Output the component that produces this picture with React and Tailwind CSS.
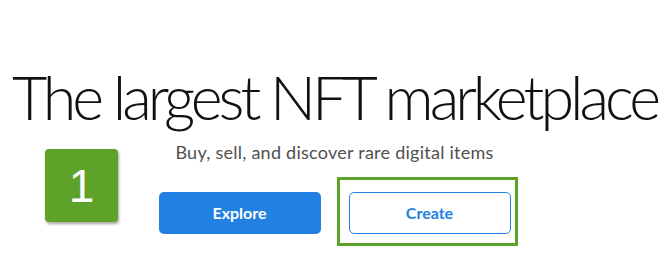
export default function App() {
  return (
    <div className="relative h-[274px] w-[669px] overflow-hidden bg-white font-['Lato',sans-serif]">
      <div className="flex flex-col items-center pt-[61px]">
        <h1 className="whitespace-nowrap text-[61px] font-light leading-[72px] tracking-[-4px] text-[#111]">
          The largest NFT marketplace
        </h1>
        <p className="mt-[7px] text-[18px] leading-[24px] tracking-[0.25px] text-[#505050]">
          Buy, sell, and discover rare digital items
        </p>
        <div className="mt-[28px] flex gap-[28px]">
          <button className="h-[42px] w-[162px] rounded-[5px] bg-[#2081e2] text-[16px] font-bold text-white">
            Explore
          </button>
          <button className="h-[42px] w-[162px] rounded-[5px] border border-[#2081e2] bg-white text-[16px] font-bold text-[#2081e2]">
            Create
          </button>
        </div>
      </div>

      {/* annotation overlays */}
      <div className="absolute left-[45px] top-[149px] flex h-[73px] w-[73px] items-center justify-center rounded-[4px] bg-[#5ea22a] shadow-[1px_2px_3px_rgba(0,0,0,0.35)]">
        <span className="font-['Liberation_Sans',sans-serif] text-[46px] leading-none text-white">1</span>
      </div>
      <div className="absolute left-[337px] top-[177px] h-[69px] w-[181px] border-[3px] border-[#5ea22a]" />
    </div>
  );
}
